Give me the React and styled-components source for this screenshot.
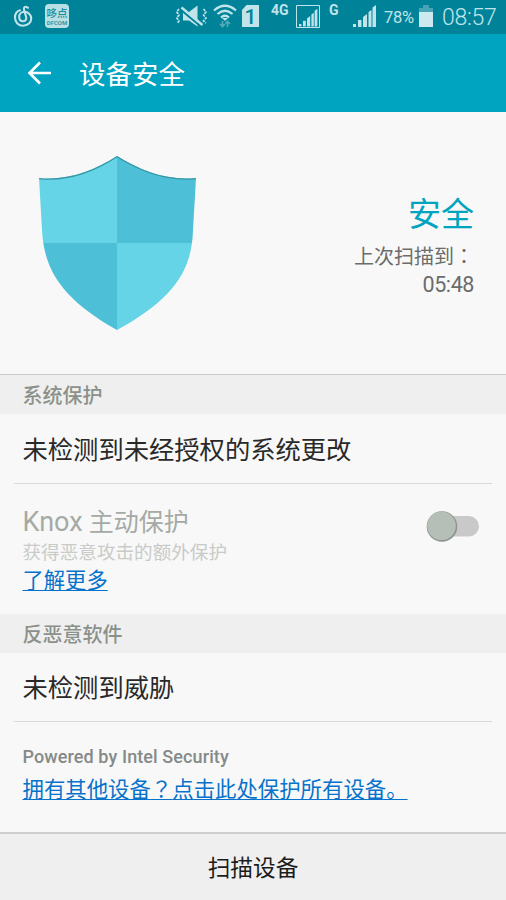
import React, { useState } from "react";
import styled, { createGlobalStyle } from "styled-components";

const GlobalStyle = createGlobalStyle`
  * { box-sizing: border-box; }
  body {
    margin: 0;
    background: #f8f8f8;
    font-family: Roboto, "Noto Sans CJK SC", sans-serif;
  }
`;

const Screen = styled.div`
  width: 506px;
  height: 900px;
  display: flex;
  flex-direction: column;
  overflow: hidden;
  background: #f8f8f8;
`;

const StatusBar = styled.header`
  height: 34px;
  flex: none;
  display: flex;
  align-items: flex-start;
  padding: 4px 9px 0 13px;
  background: #008399;
  color: #c0e4e9;
`;

const StatusIcon = styled.svg`
  flex: none;
  display: block;
  width: ${(p) => p.$w}px;
  height: 25px;
  margin-left: ${(p) => p.$gap || 0}px;
  overflow: visible;
`;

const StatusText = styled.span`
  flex: none;
  width: ${(p) => p.$w}px;
  margin-left: ${(p) => p.$gap}px;
  font-size: ${(p) => p.$size}px;
  font-weight: ${(p) => p.$weight || 400};
  line-height: ${(p) => p.$line}px;
  letter-spacing: ${(p) => p.$track || 0}px;
  white-space: nowrap;
`;

const TitleBar = styled.div`
  height: 78px;
  flex: none;
  display: flex;
  align-items: center;
  gap: 28px;
  padding-left: 27px;
  background: #00a4c0;
  color: #fff;
`;

const BackButton = styled.button`
  width: 24px;
  height: 24px;
  padding: 0;
  border: 0;
  background: none;
  color: inherit;
  svg { display: block; }
`;

const Title = styled.h1`
  margin: 3px 0 0;
  font-size: 26.5px;
  font-weight: 400;
  line-height: 40px;
`;

const Hero = styled.section`
  height: 262px;
  flex: none;
  display: flex;
  justify-content: space-between;
  padding: 43px 32px 0 38px;
`;

const Summary = styled.div`
  padding-top: 38px;
  text-align: right;
`;

const Status = styled.div`
  color: #00a4c0;
  font-size: 33px;
  line-height: 44px;
`;

const LastScan = styled.div`
  color: #6a6d6b;
  font-size: ${(p) => p.$size || 20}px;
  letter-spacing: ${(p) => p.$track || 0}px;
  line-height: 28px;
  padding-top: ${(p) => p.$top || 0}px;
`;

const SectionTitle = styled.h2`
  flex: none;
  height: ${(p) => (p.$ruled ? 40 : 39)}px;
  margin: 0;
  padding-left: 22.5px;
  border-top: ${(p) => (p.$ruled ? "1px solid #cacaca" : "0")};
  background: #efefef;
  color: #8b918a;
  font-size: 20px;
  font-weight: 500;
  line-height: 42px;
`;

const Row = styled.div`
  flex: none;
  height: ${(p) => p.$h}px;
  margin: 0 14px;
  padding: ${(p) => p.$top || 0}px 12px 0 8.5px;
  border-bottom: ${(p) => (p.$ruled ? "1px solid #d9d9d9" : "0")};
`;

const SwitchRow = styled(Row)`
  display: flex;
  justify-content: space-between;
`;

const RowText = styled.div`
  color: #292929;
  font-size: 25.3px;
  line-height: 40px;
  white-space: nowrap;
`;

const DisabledTitle = styled.div`
  color: #a5aaa5;
  font-size: 25px;
  line-height: 34px;
`;

const Latin = styled.span`
  font-size: 27px;
`;

const DisabledNote = styled.div`
  color: #c8cbc8;
  font-size: 18.6px;
  line-height: 26px;
`;

const Link = styled.a`
  display: block;
  width: max-content;
  color: #0672cb;
  font-size: ${(p) => p.$size}px;
  line-height: 30px;
  text-decoration: underline;
  text-decoration-thickness: 1px;
  text-underline-offset: 2px;
  text-decoration-skip-ink: none;
  white-space: nowrap;
`;

// full width marks that sit in the middle of their cell
const Mark = styled.span`
  font-family: "Noto Sans CJK TC", sans-serif;
`;

const Powered = styled.div`
  color: #858a88;
  font-size: 18px;
  font-weight: 500;
  line-height: 24px;
  letter-spacing: 0.1px;
  margin-bottom: 4px;
`;

const Toggle = styled.button`
  width: 54px;
  height: 38px;
  padding: 0;
  border: 0;
  background: none;
  svg { display: block; }
`;

const ScanButton = styled.button`
  flex: 1;
  padding: 3px 0 0;
  border: 0;
  border-top: 2px solid #cecece;
  background: #efefef;
  color: #1c1c1c;
  font-family: inherit;
  font-size: 22.7px;
  line-height: 34px;
`;

const Bars = ({ x = 0, y = 0, s = 1 }) => (
  <g transform={`translate(${x} ${y}) scale(${s})`} fill="currentColor">
    <rect x="0" y="20" width="3" height="3" />
    <rect x="5" y="16" width="3.5" height="7" />
    <path d="M10 13l4-3v13h-4zM15.5 8l3-2v17h-3zM19.5 3.500l3.500-2.500v22h-3.500z" />
  </g>
);

const PhoneStatus = () => (
  <StatusBar>
    <StatusIcon $w={20} viewBox="0 0 20 25" fill="none" stroke="currentColor" strokeWidth="2.100" strokeLinecap="round">
      <path d="M7 6.200C3.600 7.200 2 10.200 2 13.500C2 18.500 5.500 21.700 10.200 21.700C15 21.700 18.200 18.500 18.200 14.500C18.200 10.500 15 7.800 11.500 7.800C8.500 7.800 6.200 10 6.200 13C6.200 15.500 7.800 17.200 10 17.200C12.300 17.200 13.700 15.500 13.200 13.300L11 5.700C10.400 3.600 12 2.500 13.300 2.900L15 3.700" />
    </StatusIcon>
    <StatusIcon $w={24} $gap={12} viewBox="0 0 24 25">
      <rect width="24" height="24" rx="4" fill="#b8dfe4" />
      <text x="12" y="13" textAnchor="middle" fontSize="10.500" fontWeight="500" fontFamily="Noto Sans CJK SC" fill="#1b8fa1">哆点</text>
      <text x="12" y="20.500" textAnchor="middle" fontSize="6" fontWeight="700" fill="#3998a7">DFCOM</text>
    </StatusIcon>
    <StatusIcon $w={34} $gap={106} viewBox="0 0 34 25" fill="none" stroke="currentColor">
      <path d="M8 8h6l8.500-6.500v21L14 16.500H8z" fill="currentColor" stroke="none" />
      <path d="M5.500 5.500L26 22.500" stroke="#008399" strokeWidth="2.200" />
      <path d="M6.500 3.500L27.500 21" strokeWidth="2.300" />
      <path d="M4 5L1.800 8 4 11 1.800 14 4 17 2.500 19M28.500 5L31 8l-2.500 3L31 14l-2.500 3L31 19" strokeWidth="1.700" strokeDasharray="2.600 1" />
    </StatusIcon>
    <StatusIcon $w={24} $gap={4} viewBox="0 0 24 25" fill="none" stroke="currentColor">
      <path d="M1 6.500q11-9.500 22 0M4.500 10q7.500-6.500 15 0M8 13.500q4-3.500 8 0" strokeWidth="2.300" />
      <path d="M9 14l3 3 3-3z" fill="currentColor" stroke="none" />
      <path d="M9.500 17v5.500M7 20l2.500 2.500L12 20M14.500 23v-5.500M12.500 19.500l2-2 2.500 2.500" stroke="#56adb9" strokeWidth="1.600" />
    </StatusIcon>
    <StatusIcon $w={19} $gap={4} viewBox="0 0 19 25">
      <path d="M5.500 1H18v22H1V6z" fill="currentColor" />
      <text x="9.500" y="20" textAnchor="middle" fontSize="21" fontWeight="500" fill="#008399">1</text>
    </StatusIcon>
    <StatusText $w={20} $gap={11} $size={14} $weight={700} $line={13}>4G</StatusText>
    <StatusIcon $w={25} $gap={4} viewBox="0 0 25 25">
      <path d="M1.500 1.500h23v22h-23z" fill="none" stroke="currentColor" />
      <Bars x={4} y={4} s={0.8} />
    </StatusIcon>
    <StatusText $w={10} $gap={9} $size={14} $weight={700} $line={13}>G</StatusText>
    <StatusIcon $w={24} $gap={14} viewBox="0 0 24 25"><Bars /></StatusIcon>
    <StatusText $w={32} $gap={7} $size={16.5} $line={27} $track={-0.3}>78%</StatusText>
    <StatusIcon $w={14} $gap={3} viewBox="0 0 14 25">
      <path d="M4 1h6v3h4v4H0V4h4z" fill="#45a5b3" />
      <path d="M0 8h14v15H0z" fill="#cbe9ee" />
    </StatusIcon>
    <StatusText $w={56} $gap={9} $size={23} $weight={300} $line={28} $track={-0.3}>08:57</StatusText>
  </StatusBar>
);

const Shield = () => (
  <svg width="158" height="176" viewBox="0 0 158 176">
    <defs>
      <clipPath id="shield">
        <path d="M1 23C28 26 56 16 79 1C103 16 130 26 158 23L155 75C154 115 136 144 79 175C24 144 6 115 4 75z" />
      </clipPath>
    </defs>
    <g clipPath="url(#shield)">
      <path d="M0 0h79v88H0zM79 88h79v88H79z" fill="#65d4e7" />
      <path d="M79 0h79v88H79zM0 88h79v88H0z" fill="#4dbfd7" />
      <path d="M1 23C28 26 56 16 79 1C103 16 130 26 158 23" fill="none" stroke="#3997a4" strokeWidth="2.500" />
    </g>
  </svg>
);

const App = () => {
  const [active, setActive] = useState(false);

  return (
    <>
      <GlobalStyle />
      <Screen lang="zh-CN">
        <PhoneStatus />
        <TitleBar>
          <BackButton>
            <svg width="24" height="24" viewBox="0 0 24 24" fill="none" stroke="currentColor" strokeWidth="2.600">
              <path d="M13 1.500L2.500 12 13 22.500M2.500 12H24" />
            </svg>
          </BackButton>
          <Title>设备安全</Title>
        </TitleBar>

        <Hero>
          <Shield />
          <Summary>
            <Status>安全</Status>
            <LastScan $top={5}>上次扫描到<Mark lang="zh-TW">：</Mark></LastScan>
            <LastScan $size={21.5} $track={-0.4}>05:48</LastScan>
          </Summary>
        </Hero>

        <SectionTitle $ruled>系统保护</SectionTitle>
        <Row $h={70} $top={17} $ruled>
          <RowText>未检测到未经授权的系统更改</RowText>
        </Row>
        <SwitchRow $h={130} $top={21}>
          <div>
            <DisabledTitle><Latin>Knox</Latin> 主动保护</DisabledTitle>
            <DisabledNote>获得恶意攻击的额外保护</DisabledNote>
            <Link $size={21.3}>了解更多</Link>
          </div>
          <Toggle onClick={() => setActive(!active)}>
            <svg width="54" height="38" viewBox="0 0 54 38">
              <rect x="9" y="11" width="44" height="20.500" rx="10.250" fill="#c9c9c9" />
              <circle cx={active ? 37 : 16} cy="21.500" r="15.300" fill="#8d958f" />
              <circle cx={active ? 37 : 15.5} cy="20.800" r="14.300" fill="#b6beb8" />
            </svg>
          </Toggle>
        </SwitchRow>

        <SectionTitle>反恶意软件</SectionTitle>
        <Row $h={69} $top={16} $ruled>
          <RowText>未检测到威胁</RowText>
        </Row>
        <Row $h={110} $top={23}>
          <Powered>Powered by Intel Security</Powered>
          <Link $size={21.4}>
            拥有其他设备<Mark lang="zh-TW">？</Mark>点击此处保护所有设备。
          </Link>
        </Row>

        <ScanButton>扫描设备</ScanButton>
      </Screen>
    </>
  );
};

export default App;
